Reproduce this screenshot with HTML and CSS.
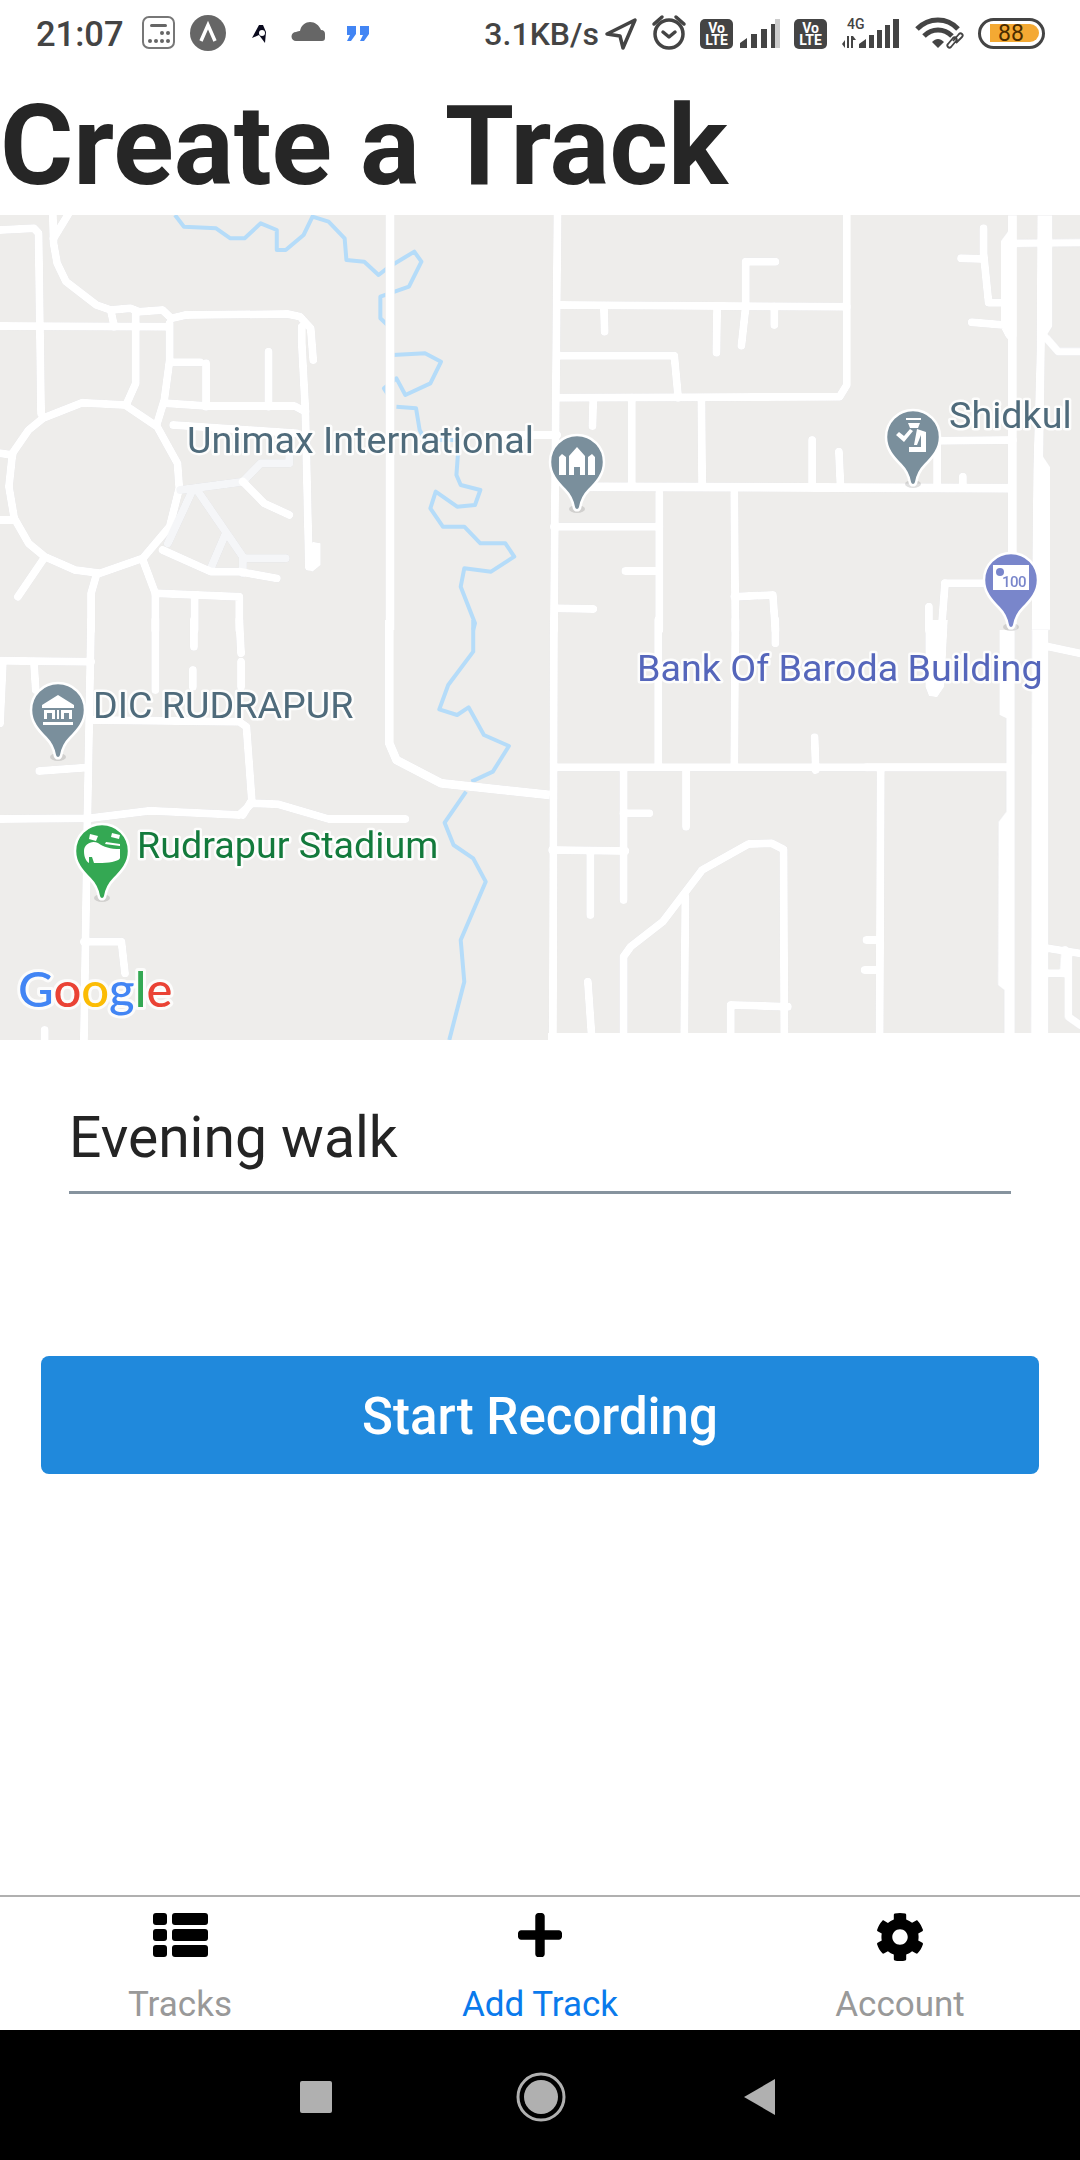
FILE: index.html
```html
<!DOCTYPE html>
<html lang="en">
<head>
<meta charset="utf-8">
<title>Create a Track</title>
<link rel="stylesheet" href="styles.css">
</head>
<body>
<div class="screen">
  <header class="status">
    <div class="status-left">
      <span class="time">21:07</span>
      <svg class="si" width="48" height="60" viewBox="0 0 48 60"><rect x="1" y="17" width="31" height="31" rx="6" class="i-line"/><rect x="8" y="24" width="17" height="3" rx="1.5" class="i-f6"/><circle cx="20" cy="33" r="2" class="i-f6"/><circle cx="26" cy="33" r="2" class="i-f6"/><circle cx="8" cy="41" r="2" class="i-f6"/><circle cx="14" cy="41" r="2" class="i-f6"/><circle cx="20" cy="41" r="2" class="i-f6"/><circle cx="26" cy="41" r="2" class="i-f6"/></svg>
      <svg class="si" width="60" height="60" viewBox="0 0 60 60"><circle cx="18" cy="33" r="18" class="i-f6"/><path d="M11 41 18 25l7 16" class="i-chev"/></svg>
      <svg class="si" width="42" height="60" viewBox="0 0 42 60"><path d="M9 25 13 25 16 32 15 43 9 35 2 38Z" class="i-dark"/><circle cx="12" cy="33" r="3" fill="#fff"/></svg>
      <svg class="si" width="55" height="60" viewBox="0 0 55 60"><path d="M4 41a4 4 0 0 1 0-9c2-1 3-1 4-1 1-6 6-9 10-9 5 0 9 3 11 8 3 0 4 2 4 4v4c0 2-1 3-3 3Z" class="i-f6"/></svg>
      <svg class="si" width="23" height="60" viewBox="0 0 23 60"><path d="M0 26h9v8l-5 7H0l3-6H0ZM13 26h9v8l-5 7h-4l3-6h-3Z" class="i-blue"/></svg>
    </div>
    <div class="status-right">
      <span class="speed">3.1KB/s</span>
      <svg class="si" width="47" height="60" viewBox="0 0 47 60"><path d="M2 34 30 20 18 48l-3-12Z" class="i-stroke"/></svg>
      <svg class="si" width="48" height="60" viewBox="0 0 48 60"><circle cx="17" cy="34" r="14" class="i-stroke"/><path d="M11 32l6 5 6-5M2 24l8-7M32 24l-8-7" class="i-stroke"/></svg>
      <svg class="si" width="40" height="60" viewBox="0 0 40 60"><rect y="19" width="33" height="30" rx="5" class="i-f4"/><text x="16.5" y="33" class="volte">Vo</text><text x="16.5" y="45" class="volte">LTE</text></svg>
      <svg class="si" width="54" height="60" viewBox="0 0 54 60"><path d="M0 48v-5l7-5v10ZM11 48V34h6v14ZM21 48V29h6v19ZM31 48V24h6v24Z" class="i-f4"/><path d="M35 48V19h5v29Z" class="i-off"/></svg>
      <svg class="si" width="48" height="60" viewBox="0 0 48 60"><rect y="19" width="33" height="30" rx="5" class="i-f4"/><text x="16.5" y="33" class="volte">Vo</text><text x="16.5" y="45" class="volte">LTE</text></svg>
      <svg class="si" width="73" height="60" viewBox="0 0 73 60"><text x="5" y="29" class="four-g">4G</text><path d="M0 44l3-4v8ZM5 36h2v12H5ZM11 36v12H9V36Zl3 4h-3Z" class="i-f4"/><path d="M17 48v-4l7-5v9ZM27 48V35h5v13ZM35 48V30h5v18ZM43 48V25h5v23ZM51 48V19h6v29Z" class="i-f4"/></svg>
      <svg class="si" width="63" height="60" viewBox="0 0 63 60"><path d="M2 29c12-12 30-12 41 0M9 36c8-8 20-8 28 0" class="i-wifi"/><path d="M17 42c4-4 8-4 12 0l-6 6Z" class="i-f4"/><path d="M33 44l5-6c2-2 5 1 3 3l-5 6c-2 2-5-1-3-3ZM38 41l6-7c2-2 5 1 3 3l-6 6" class="i-link"/></svg>
      <svg class="si" width="67" height="60" viewBox="0 0 67 60"><rect x="1.5" y="19.5" width="64" height="28" rx="14" class="i-batt"/><path d="M12 24h40a9 9 0 0 1 0 18H12Z" class="i-orange"/><text x="33" y="41" class="batt-text">88</text></svg>
    </div>
  </header>

  <h1 class="title">Create a Track</h1>

  <div class="map">
    <svg class="map-svg" width="1080" height="825" viewBox="0 215 1080 825">
      <g class="water" transform="translate(0 210) scale(.35714 .33333)">
        <polyline points="490,15 515,50 605,55 645,85 685,85 730,40 775,60 775,120 800,120 850,75 875,20 920,35 965,85 970,150 1020,155 1060,195 1090,170 1160,125 1180,155 1145,230 1065,260 1065,325 1090,350"/>
        <polyline points="1100,435 1190,430 1235,455 1205,520 1135,555 1110,505 1075,535 1090,560"/>
        <polyline points="1110,590 1165,595 1175,660 1190,690 1285,690 1278,795 1290,825 1345,840 1330,885 1280,890 1220,845 1205,895 1240,950 1300,950 1345,1000 1415,1000 1440,1040 1375,1085 1300,1075 1290,1130 1330,1240 1325,1260"/>
      </g>
      <g class="water" transform="translate(0 620) scale(.35714 .33333)">
        <polyline points="1325,0 1325,95 1255,195 1230,268 1280,285 1312,262 1355,345 1425,378 1380,455 1320,485"/>
        <polyline points="1305,515 1245,608 1270,675 1325,715 1360,785 1290,960 1300,1085 1258,1260"/>
      </g>

      <g class="roads">
        <g transform="translate(0 210) scale(.35714 .33333)">
          <polyline points="0,60 95,55 108,70 115,610"/>
          <polyline points="148,15 150,100 160,160 185,215 270,285 310,300 365,295 390,305 455,300 480,325 520,315 805,312 840,320 870,355 877,450"/>
          <polyline points="190,15 150,85"/>
          <polyline points="0,348 470,350"/>
          <polyline points="310,300 320,350"/>
          <polyline points="380,310 380,520 355,580"/>
          <polyline points="475,340 475,450 460,570 440,640"/>
          <polyline points="480,457 560,457"/>
          <polyline points="577,460 577,590"/>
          <polyline points="752,425 752,590"/>
          <polyline points="465,580 580,588 825,588 855,605"/>
          <polyline points="845,350 845,400 855,600 865,1070"/>
          <polyline points="485,645 830,670"/>
          <polygon class="solid" points="855,1075 875,1085 898,1065 898,1000 875,995"/>
          <polygon points="230,578 350,585 440,650 497,760 502,835 475,950 400,1045 280,1090 210,1080 125,1040 80,1000 40,925 25,830 35,730 80,660 120,625"/>
          <polyline points="0,730 35,735"/>
          <polyline points="0,930 40,930"/>
          <polyline points="120,1050 50,1160"/>
          <polyline points="270,1095 255,1150 255,1260"/>
          <polyline points="400,1050 435,1150 435,1260"/>
          <polyline points="435,1150 670,1160 670,1260"/>
          <polyline points="545,1160 545,1260"/>
          <polyline class="lane" points="505,840 680,815 730,760 810,760 810,720"/>
          <polyline points="680,815 740,880 810,915"/>
          <polyline class="lane" points="535,850 470,1000"/>
          <polyline class="lane" points="555,845 680,1040 680,1090"/>
          <polyline class="lane" points="630,975 590,1075"/>
          <polyline class="lane" points="685,1045 800,1045"/>
          <polyline points="455,1020 590,1085 670,1085 775,1105"/>
          <polyline class="main" points="1092,15 1092,1260"/>
          <polyline points="1400,675 1560,675"/>
        </g>
        <g transform="translate(520 210) scale(.35714 .33333)">
          <polyline points="105,15 100,600 95,1260"/>
          <polyline points="110,285 915,290"/>
          <polyline points="915,15 915,525 895,560 110,563"/>
          <polyline points="235,295 237,365"/>
          <polyline points="552,290 550,428"/>
          <polyline points="632,290 620,407"/>
          <polyline points="632,290 632,155 715,155"/>
          <polyline points="712,290 712,345"/>
          <polyline points="110,437 432,437 443,563"/>
          <polyline points="205,570 203,648"/>
          <polyline points="313,563 313,820"/>
          <polyline points="508,570 510,820"/>
          <polyline class="main" points="190,830 1380,835"/>
          <polyline points="390,850 390,1260"/>
          <polyline points="600,850 603,1260"/>
          <polyline points="95,950 390,950"/>
          <polyline points="295,1083 380,1083"/>
          <polyline points="100,1195 205,1197"/>
          <polyline points="600,1160 708,1155 715,1260"/>
          <polyline points="818,690 818,820"/>
          <polyline points="893,725 897,820"/>
          <polyline points="1168,690 1168,820"/>
          <polyline points="1180,692 1380,690"/>
          <polyline points="1240,800 1240,820"/>
          <polyline points="1298,55 1298,130 1312,278 1360,278"/>
          <polyline points="1235,145 1298,147"/>
          <polyline points="1265,337 1355,345 1370,375"/>
          <polyline points="1145,1190 1145,1260"/>
          <polyline points="1190,1120 1180,1260"/>
          <polyline points="1190,1120 1300,1120"/>
        </g>
        <g transform="translate(0 620) scale(.35714 .33333)">
          <polyline points="255,0 245,580 235,1260"/>
          <polyline points="0,122 255,125"/>
          <polyline points="95,125 100,210"/>
          <polyline points="8,125 0,310"/>
          <polyline points="435,0 435,210"/>
          <polyline points="543,0 543,80"/>
          <polyline points="540,150 540,200"/>
          <polyline points="670,0 675,100"/>
          <polyline points="675,125 675,200"/>
          <polyline points="260,300 670,305 690,320 705,540 680,585"/>
          <polyline points="110,453 235,443"/>
          <polyline points="0,597 250,595 420,572 670,585 705,550 780,553 920,597 1135,597"/>
          <polyline points="235,965 340,965 350,1060"/>
          <polyline points="125,1230 125,1260"/>
          <polyline class="main" points="1090,0 1090,370 1110,420 1235,490 1540,525"/>
        </g>
        <g transform="translate(520 620) scale(.35714 .33333)">
          <polyline points="95,0 92,1260"/>
          <polyline points="105,442 1360,442"/>
          <polyline points="387,0 387,430"/>
          <polyline points="603,0 600,430"/>
          <polyline points="715,0 715,70"/>
          <polygon class="solid" points="1135,0 1135,200 1145,228 1168,232 1188,200 1198,0"/>
          <polyline points="825,352 828,450"/>
          <polyline points="290,450 290,840"/>
          <polyline points="290,580 362,580"/>
          <polyline points="465,450 465,620"/>
          <polyline points="90,690 295,693"/>
          <polyline points="197,700 197,885"/>
          <polyline points="1010,450 1007,1240"/>
          <polyline points="970,960 1005,960"/>
          <polyline points="965,1050 1005,1050"/>
          <polyline points="290,1240 290,1010 310,980 400,905 510,750 640,672 705,670 738,688 740,1240"/>
          <polyline points="463,830 460,1240"/>
          <polyline points="590,1240 590,1155 750,1160"/>
          <polyline points="190,1085 200,1240"/>
        </g>
        <g transform="translate(900 210) scale(.33333)">
          <polygon class="solid" points="303,92 325,62 325,15 350,15 350,380 322,378 318,360 303,340"/>
          <polyline class="main" points="337,15 337,1260"/>
          <polygon class="solid" points="412,15 457,15 457,350 435,385 430,740 450,770 450,1260 395,1260 400,780 410,420"/>
          <polyline points="350,100 540,98"/>
          <polyline points="440,385 475,425 540,425"/>
        </g>
        <g transform="translate(900 630) scale(.33333)">
          <polygon class="solid" points="320,0 345,0 345,1260 312,1260 312,1080 293,1065 295,575 318,545 318,265 298,255 298,0"/>
          <polygon class="solid" points="395,0 445,0 445,1260 392,1260"/>
          <polyline points="445,50 540,70"/>
          <polyline points="445,955 540,970"/>
          <polyline points="505,975 505,1160 540,1185"/>
          <polyline points="495,960 490,1030"/>
          <polyline points="442,1030 495,1030"/>
          <polyline points="-100,412 318,412"/>
        </g>
        <rect x="548" y="1033" width="532" height="8" class="fill-road"/>
      </g>

      <text x="187" y="453" class="label slate">Unimax International</text>
      <text x="949" y="428" class="label slate">Shidkul</text>
      <text x="93" y="718" class="label slate">DIC RUDRAPUR</text>
      <text x="137" y="858" class="label green">Rudrapur Stadium</text>
      <text x="637" y="681" class="label indigo">Bank Of Baroda Building</text>

      <defs>
        <path id="pin" d="M0-27C15-27 27-15 27 0 27 12 20 20 12 28 6 34 4 40 3 46 2 49-2 49-3 46-4 40-6 34-12 28-20 20-27 12-27 0-27-15-15-27 0-27Z"/>
      </defs>

      <g transform="translate(577 462)">
        <ellipse cy="47" rx="8" ry="4" class="pin-shadow"/>
        <use href="#pin" class="pin-slate"/>
        <path d="M-18 13V-5l3-3 4 3V13ZM-8 13V-6L0-15 8-6V13H3V5H-3V13ZM11 13V-5l4-3 3 3V13Z" class="pin-glyph"/>
      </g>
      <g transform="translate(913 437)">
        <ellipse cy="47" rx="8" ry="4" class="pin-shadow"/>
        <use href="#pin" class="pin-slate"/>
        <path d="M-7-19H8v2H-7ZM-5-14H7L5-9H-3ZM-17-2l3-3 5 4 6-7 3 2-9 11ZM4-8 13-5V15H-4V10H8V-2L4 8H1Z" class="pin-glyph"/>
      </g>
      <g transform="translate(1011 580)">
        <ellipse cy="47" rx="8" ry="4" class="pin-shadow"/>
        <use href="#pin" class="pin-indigo"/>
        <rect x="-18" y="-15" width="36" height="25" class="pin-glyph"/>
        <circle cx="-11" cy="-8" r="4" class="pin-indigo-f"/>
        <text x="3" y="7" class="pin-num">100</text>
      </g>
      <g transform="translate(58 710)">
        <ellipse cy="47" rx="8" ry="4" class="pin-shadow"/>
        <use href="#pin" class="pin-slate"/>
        <path d="M-16-5 0-15 16-5V-2H-16ZM-14 0H-3V9H-6V3H-11V9H-14ZM3 0H14V9H11V3H6V9H3ZM-1 0H1V9H-1ZM-15 12H15V15H-15Z" class="pin-glyph"/>
      </g>
      <g transform="translate(102 851)">
        <ellipse cy="47" rx="8" ry="4" class="pin-shadow"/>
        <use href="#pin" class="pin-green"/>
        <path d="M-18 0C-18-7-10-11-4-8 2-4 8-2 18-2V7C18 9 10 12 0 12H-8L-10 6H-13L-13 12C-16 10-18 6-18 0ZM-12-17-4-15-6-10-13-12ZM10-18 18-16 17-12 9-14ZM4-9 18-7V-5L3-7Z" class="pin-glyph"/>
      </g>

      <text x="18" y="1007" class="google"><tspan class="g-blue">G</tspan><tspan class="g-red">o</tspan><tspan class="g-yellow">o</tspan><tspan class="g-blue">g</tspan><tspan class="g-green">l</tspan><tspan class="g-red">e</tspan></text>
    </svg>
  </div>

  <main class="form">
    <div class="field">Evening walk</div>
    <button class="primary">Start Recording</button>
  </main>

  <nav class="tabs">
    <div class="tab">
      <svg class="tab-icon" width="55" height="48" viewBox="0 0 55 48"><rect y="0" width="14" height="12" rx="3"/><rect x="19" y="0" width="36" height="12" rx="3"/><rect y="16" width="14" height="12" rx="3"/><rect x="19" y="16" width="36" height="12" rx="3"/><rect y="32" width="14" height="12" rx="3"/><rect x="19" y="32" width="36" height="12" rx="3"/></svg>
      <span class="tab-label">Tracks</span>
    </div>
    <div class="tab active">
      <svg class="tab-icon" width="44" height="48" viewBox="0 32 448 488"><path d="M416 208H272V64c0-17.67-14.33-32-32-32h-32c-17.67 0-32 14.33-32 32v144H32c-17.67 0-32 14.33-32 32v32c0 17.67 14.33 32 32 32h144v144c0 17.67 14.33 32 32 32h32c17.67 0 32-14.33 32-32V304h144c17.67 0 32-14.33 32-32v-32c0-17.67-14.33-32-32-32z"/></svg>
      <span class="tab-label">Add Track</span>
    </div>
    <div class="tab">
      <svg class="tab-icon" width="50" height="48" viewBox="16 8 480 496"><path d="M487.4 315.7l-42.6-24.6c4.3-23.2 4.3-47 0-70.2l42.6-24.6c4.9-2.8 7.1-8.6 5.5-14-11.1-35.6-30-67.8-54.7-94.6-3.8-4.1-10-5.1-14.8-2.3L380.8 110c-17.9-15.4-38.5-27.3-60.8-35.1V25.8c0-5.6-3.9-10.5-9.4-11.7-36.7-8.2-74.3-7.8-109.2 0-5.5 1.2-9.4 6.1-9.4 11.7V75c-22.2 7.9-42.8 19.8-60.8 35.1L88.7 85.5c-4.9-2.8-11-1.9-14.8 2.3-24.7 26.7-43.6 58.9-54.7 94.6-1.7 5.4.6 11.2 5.5 14L67.3 221c-4.3 23.2-4.3 47 0 70.2l-42.6 24.6c-4.9 2.8-7.1 8.6-5.5 14 11.1 35.6 30 67.8 54.7 94.6 3.8 4.1 10 5.1 14.8 2.3l42.6-24.6c17.9 15.4 38.5 27.3 60.8 35.1v49.2c0 5.6 3.9 10.5 9.4 11.7 36.7 8.2 74.3 7.8 109.2 0 5.5-1.2 9.4-6.1 9.4-11.7v-49.2c22.2-7.9 42.8-19.8 60.8-35.1l42.6 24.6c4.9 2.8 11 1.9 14.8-2.3 24.7-26.7 43.6-58.9 54.7-94.6 1.5-5.5-.7-11.3-5.6-14.1zM256 336c-44.1 0-80-35.9-80-80s35.9-80 80-80 80 35.9 80 80-35.9 80-80 80z"/></svg>
      <span class="tab-label">Account</span>
    </div>
  </nav>

  <footer class="nav">
    <svg width="32" height="32" viewBox="0 0 32 32"><rect width="32" height="32" rx="2" class="nav-f"/></svg>
    <svg class="nav-home" width="50" height="50" viewBox="0 0 50 50"><circle cx="25" cy="25" r="23" class="nav-ring"/><circle cx="25" cy="25" r="17" class="nav-f"/></svg>
    <svg width="31" height="36" viewBox="0 0 31 36"><path d="M31 0V36L0 18Z" class="nav-f"/></svg>
  </footer>
</div>
</body>
</html>
```

FILE: styles.css
```css
* { box-sizing: border-box; }
html, body { margin: 0; padding: 0; background: #fff; }
body { font-family: Roboto, "Noto Sans", sans-serif; }
.screen { width: 1080px; height: 2160px; display: flex; flex-direction: column; overflow: hidden; }

.status { height: 60px; flex: none; display: flex; justify-content: space-between; color: #444; font-weight: 500; font-size: 32px; }
.status-left { display: flex; align-items: flex-start; padding-left: 36px; }
.status-right { display: flex; align-items: flex-start; padding-right: 35px; }
.time { font-size: 34.5px; line-height: 68px; width: 106px; flex: none; }
.speed { line-height: 68px; margin-right: 6px; }
.si { display: block; flex: none; overflow: visible; }
.i-line { fill: none; stroke: #777; stroke-width: 2; }
.i-f6 { fill: #666; }
.i-f4 { fill: #444; }
.i-dark { fill: #0b0b1e; }
.i-blue { fill: #4285f4; }
.i-off { fill: #ccc; }
.i-orange { fill: #f4a933; }
.i-chev { fill: none; stroke: #fff; stroke-width: 3.5; }
.i-stroke { fill: none; stroke: #444; stroke-width: 3.5; stroke-linejoin: round; stroke-linecap: round; }
.i-wifi { fill: none; stroke: #444; stroke-width: 5; }
.i-link { fill: none; stroke: #444; stroke-width: 1.8; }
.i-batt { fill: none; stroke: #444; stroke-width: 3; }
.volte { font-size: 14px; font-weight: 700; fill: #fff; text-anchor: middle; }
.four-g { font-size: 14px; font-weight: 500; fill: #444; }
.batt-text { font-size: 23px; font-weight: 400; fill: #4b2c00; text-anchor: middle; }

.title { margin: 0; height: 155px; flex: none; padding-top: 13px; font-size: 112px; line-height: 145px; font-weight: 700; color: #262626; }

.map { height: 825px; flex: none; background: #eeedeb; overflow: hidden; }
.map-svg { display: block; }
.water polyline { fill: none; stroke: #b5dcf9; stroke-width: 4px; vector-effect: non-scaling-stroke; stroke-linejoin: round; }
.roads { filter: drop-shadow(0 0 .6px #d4d4d8); }
.roads polyline, .roads polygon { fill: none; stroke: #fff; stroke-width: 8px; vector-effect: non-scaling-stroke; stroke-linejoin: round; stroke-linecap: round; }
.roads .lane { stroke: #f5f6f8; }
.roads .main { stroke-width: 9px; stroke-linecap: butt; }
.roads .solid { fill: #fff; stroke: none; }
.fill-road { fill: #fff; }

.label { font-size: 37.7px; paint-order: stroke; stroke: rgba(255,255,255,.85); stroke-width: 5px; stroke-linejoin: round; }
.slate { fill: #4f6b7b; }
.green { fill: #137a3c; }
.indigo { fill: #5566bb; }
.pin-slate, .pin-indigo, .pin-green { stroke: #fff; stroke-width: 2.5; }
.pin-slate { fill: #7a8f9c; }
.pin-indigo { fill: #7986cb; }
.pin-indigo-f { fill: #7986cb; }
.pin-green { fill: #34a853; }
.pin-glyph { fill: #fff; }
.pin-shadow { fill: rgba(0,0,0,.12); }
.pin-num { font-size: 15px; font-weight: 500; fill: #7986cb; text-anchor: middle; letter-spacing: -.5px; }

.google { font-family: Lato, Roboto, sans-serif; font-size: 49px; font-weight: 500; paint-order: stroke; stroke: rgba(255,255,255,.8); stroke-width: 6px; stroke-linejoin: round; }
.g-blue { fill: #4285f4; }
.g-red { fill: #ea4335; }
.g-yellow { fill: #fbbc05; }
.g-green { fill: #34a853; }

.form { flex: 1; padding: 0 41px; display: flex; flex-direction: column; }
.field { margin: 57px 28px 0; height: 97px; font-size: 57px; line-height: 60px; padding: 11px 0 0; color: #242424; border-bottom: 3px solid #86939e; }
.primary { margin-top: 162px; height: 118px; padding-top: 3px; border: 0; border-radius: 8px; background: #2089dc; color: #fff; font-family: inherit; font-size: 51px; font-weight: 500; }

.tabs { height: 135px; flex: none; display: flex; border-top: 2px solid #b0b0b0; background: #fff; }
.tab { flex: 1; display: flex; flex-direction: column; align-items: center; padding-top: 16px; }
.tab-icon { display: block; height: 48px; fill: #000; }
.tab-label { margin-top: 22px; font-size: 35px; line-height: 44px; color: #999; }
.active .tab-label { color: #0a7aec; }

.nav { height: 130px; flex: none; background: #000; display: flex; align-items: center; justify-content: center; gap: 181px; padding-right: 6px; padding-top: 3px; }
.nav-home { margin-left: 3px; margin-right: -3px; }
.nav-f { fill: #b0b0b0; }
.nav-ring { fill: none; stroke: #b0b0b0; stroke-width: 3; }
```
